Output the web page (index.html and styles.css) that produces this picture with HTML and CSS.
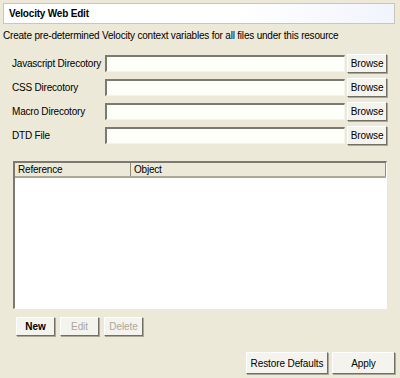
FILE: index.html
```html
<!DOCTYPE html>
<html>
<head>
<title>Velocity Web Edit</title>
<link rel="stylesheet" href="styles.css">
</head>
<body>
  <div class="page">
    <div class="header">Velocity Web Edit</div>
    <div class="desc">Create pre-determined Velocity context variables for all files under this resource</div>

    <div class="form">
      <label for="js">Javascript Direcotory</label>
      <input type="text" id="js">
      <button type="button">Browse</button>

      <label for="css">CSS Direcotory</label>
      <input type="text" id="css">
      <button type="button">Browse</button>

      <label for="macro">Macro Direcotory</label>
      <input type="text" id="macro">
      <button type="button">Browse</button>

      <label for="dtd">DTD File</label>
      <input type="text" id="dtd">
      <button type="button">Browse</button>
    </div>

    <div class="table">
      <div class="thead">
        <div class="col-ref">Reference</div>
        <div class="col-obj">Object</div>
      </div>
      <div class="tbody"></div>
    </div>

    <div class="actions">
      <button type="button" class="new">New</button>
      <button type="button" class="edit" disabled>Edit</button>
      <button type="button" class="delete" disabled>Delete</button>
    </div>

    <div class="footer">
      <button type="button" class="restore">Restore Defaults</button>
      <button type="button" class="apply">Apply</button>
    </div>
  </div>
</body>
</html>
```

FILE: styles.css
```css
body {
  margin: 0;
  background: #ece9d8;
  font-family: "Liberation Sans", Arial, sans-serif;
  font-size: 10px;
  letter-spacing: -0.2px;
  color: #000;
}
.page {
  width: 400px;
  height: 378px;
  padding-top: 3px;
  box-sizing: border-box;
  white-space: nowrap;
}
.header {
  margin: 0 5px 0 3px;
  height: 19px;
  line-height: 19px;
  padding-left: 5px;
  font-weight: bold;
  border: 1px solid #c9c7ba;
  background: linear-gradient(to right, #ffffff 60%, #f1f4fb);
}
.desc {
  margin: 5px 0 0 3px;
  height: 14px;
  line-height: 14px;
}
.form {
  display: grid;
  grid-template-columns: 91px 240px 40px;
  column-gap: 2px;
  row-gap: 5px;
  align-items: center;
  margin: 11px 0 0 12px;
}
input[type="text"] {
  height: 17px;
  box-sizing: border-box;
  border: 1px solid;
  border-top: 2px solid #7a7a70;
  border-left: 2px solid #7a7a70;
  border-color: #7a7a70 #f4f3ee #f4f3ee #7a7a70;
  background: #fffff9;
  margin: 0;
  padding: 0 2px;
}
button {
  font-family: "Liberation Sans", Arial, sans-serif;
  font-size: 10px;
  letter-spacing: -0.1px;
  color: #000;
  background: #f4f3ee;
  border: 1px solid;
  border-color: #ffffff #716f64 #716f64 #ffffff;
  box-shadow: 1px 1px 0 #aca899;
  padding: 0;
  height: 19px;
  margin: 0;
  white-space: nowrap;
}
button:disabled {
  color: #aca899;
}
.table {
  margin: 16px 0 0 13px;
  width: 374px;
  height: 148px;
  box-sizing: border-box;
  border: 1px solid;
  border-color: #7a7a70 #ffffff #ffffff #7a7a70;
  border-width: 2px 1px 1px 2px;
  background: #fff;
  display: flex;
  flex-direction: column;
}
.thead {
  display: flex;
  height: 13px;
  line-height: 13px;
  background: #ece9d8;
  border-bottom: 2px solid #aca899;
}
.col-ref {
  width: 112px;
  padding-left: 3px;
  border-right: 1px solid #8f8d80;
}
.col-obj {
  flex: 1;
  padding-left: 3px;
  border-right: 1px solid #8f8d80;
}
.tbody {
  flex: 1;
}
.actions {
  display: flex;
  gap: 5px;
  margin: 8px 0 0 16px;
}
.actions button {
  width: 39px;
}
.new {
  font-weight: bold;
}
.footer {
  display: flex;
  justify-content: flex-end;
  gap: 4px;
  margin: 16px 5px 0 0;
}
.footer button {
  height: 22px;
}
.restore {
  width: 82px;
}
.apply {
  width: 63px;
}
```
